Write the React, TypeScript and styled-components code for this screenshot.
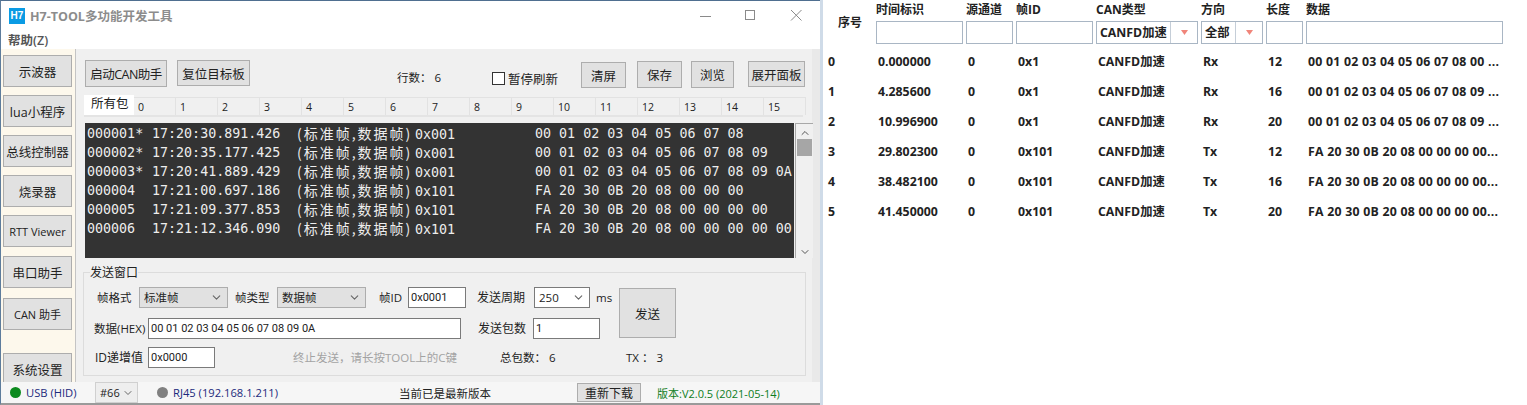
import styled, { createGlobalStyle } from "styled-components";
import { ChevronDown, ChevronUp } from "lucide-react";

const UI_FONT = `"Open Sans", "Noto Sans CJK SC", sans-serif`;

const GlobalStyle = createGlobalStyle`
  html, body {
    margin: 0;
    padding: 0;
    background: #fff;
    overflow: hidden;
  }
  * { box-sizing: border-box; }
`;

const Page = styled.div`
  display: flex;
  width: 1527px;
  height: 405px;
  font-family: ${UI_FONT};
  color: #222;
`;

const Window = styled.div`
  display: flex;
  flex-direction: column;
  width: 820px;
  height: 405px;
  flex: none;
  border-top: 1px solid #4f6f90;
  border-left: 1px solid #5d7c9c;
  border-bottom: 2px solid #9a9a9a;
  background: #fff;
`;

const Gutter = styled.div`
  width: 3px;
  flex: none;
  background: #cfdbe8;
`;

const TitleBar = styled.div`
  display: flex;
  align-items: center;
  height: 29px;
  flex: none;
  padding: 0 7px 0 8px;
`;

const AppIcon = styled.div`
  display: flex;
  align-items: center;
  justify-content: center;
  width: 16px;
  height: 16px;
  background: #0a9be4;
  color: #fff;
  font: bold 10px "Liberation Sans", sans-serif;
`;

const AppTitle = styled.div`
  margin-left: 5px;
  font-size: 12.5px;
  font-weight: 700;
  color: #8c8c8c;
  flex: 1;
`;

const WinControls = styled.svg`
  width: 115px;
  height: 14px;
  flex: none;
`;

const MenuBar = styled.div`
  height: 19px;
  flex: none;
  padding-left: 7px;
  font-size: 12.5px;
  font-weight: 600;
  line-height: 22px;
  color: #555;
`;

const Body = styled.div`
  display: flex;
  flex: 1;
  min-height: 0;
  background: #f0f0f0;
`;

const Sidebar = styled.div`
  display: flex;
  flex-direction: column;
  gap: 8px;
  width: 75px;
  flex: none;
  padding: 6px 0 0 2px;
  background: #fdf8ec;
  border-right: 1px solid #c4c4c4;
  overflow: hidden;
`;

const SideButton = styled.div<{ $small?: boolean; $gapTop?: number }>`
  display: flex;
  align-items: center;
  justify-content: center;
  width: 69px;
  height: 32px;
  flex: none;
  margin-top: ${(p) => p.$gapTop ?? 0}px;
  background: #e1e1e1;
  border: 1px solid #adadad;
  font-size: ${(p) => (p.$small ? 11 : 12.5)}px;
  white-space: nowrap;
`;

const Main = styled.div`
  display: flex;
  flex-direction: column;
  flex: 1;
  min-width: 0;
  padding: 11px 14px 0 9px;
  background: linear-gradient(to right, #f0f0f0 736px, #e9e9e9 736px);
`;

const ToolRow = styled.div`
  display: flex;
  align-items: flex-start;
  height: 37px;
  flex: none;
`;

const ToolButton = styled.div<{ $w: number; $h?: number; $left?: number; $top?: number; $tight?: boolean }>`
  display: flex;
  align-items: center;
  justify-content: center;
  width: ${(p) => p.$w}px;
  height: ${(p) => p.$h ?? 27}px;
  flex: none;
  margin-left: ${(p) => p.$left ?? 0}px;
  margin-top: ${(p) => p.$top ?? 0}px;
  background: #e1e1e1;
  border: 1px solid #adadad;
  font-size: 12.5px;
  letter-spacing: ${(p) => (p.$tight ? "-0.5px" : "0")};
  white-space: nowrap;
`;

const RowCount = styled.div`
  width: 95px;
  margin: 9px 0 0 147px;
  font-size: 11.5px;
  white-space: pre;
`;

const PauseCheck = styled.label`
  display: flex;
  align-items: center;
  gap: 3px;
  width: 89px;
  margin-top: 9px;
  font-size: 12.5px;
  white-space: nowrap;
`;

const CheckBox = styled.span`
  width: 13px;
  height: 13px;
  background: #fff;
  border: 1px solid #333;
`;

const TabStrip = styled.div`
  display: flex;
  align-items: flex-end;
  width: 719px;
  height: 20px;
  flex: none;
  margin-left: -1px;
  border-bottom: 2px solid #e4e4e4;
`;

const ActiveTab = styled.div`
  width: 50px;
  height: 20px;
  flex: none;
  padding-left: 7px;
  background: #fff;
  font-size: 12.5px;
  line-height: 18px;
`;

const Tab = styled.div`
  width: 42px;
  height: 18px;
  flex: none;
  padding-left: 4px;
  border-top: 1px solid #e2e2e2;
  border-right: 1px solid #e2e2e2;
  font-size: 10.5px;
  line-height: 18px;
`;

const ListFrame = styled.div`
  display: flex;
  width: 728px;
  height: 135px;
  flex: none;
  margin-top: 6px;
`;

const PacketList = styled.div`
  width: 709px;
  padding: 1px 0 0 2px;
  background: #333;
  color: #ededed;
  font-family: "DejaVu Sans Mono", "Noto Sans CJK SC", monospace;
  font-size: 13.33px;
  overflow: hidden;
`;

const PacketRow = styled.div`
  display: grid;
  grid-template-columns: 65px 145px 238px 1fr;
  height: 19px;
  line-height: 19px;
  white-space: pre;
`;

const FrameKind = styled.span`
  display: inline-block;
  width: 118px;
  font-family: "Noto Sans CJK SC", sans-serif;
  font-size: 14px;
  letter-spacing: 2px;
`;

const ScrollBar = styled.div`
  display: flex;
  flex-direction: column;
  align-items: center;
  width: 18px;
  flex: none;
  margin-left: 1px;
  padding: 3px 0 0;
  background: #f0f0f0;
  border-top: 1px solid #a8a8a8;
  border-left: 1px solid #a8a8a8;
  color: #555;
`;

const ScrollTrack = styled.div`
  flex: 1;
  width: 100%;
  padding: 0 1px 0 1px;
`;

const ScrollThumb = styled.div`
  height: 17px;
  background: #a6a6a6;
`;

const SendGroup = styled.fieldset`
  display: block;
  width: 723px;
  height: 110px;
  flex: none;
  margin: 8px 0 0 -2px;
  padding: 2px 0 0 7px;
  border: 1px solid #dcdcdc;
  min-inline-size: 0;
`;

const GroupTitle = styled.legend`
  margin-left: -1px;
  padding: 0;
  font-size: 12px;
  line-height: 13px;
`;

const SendGrid = styled.div`
  display: flex;
  align-items: flex-start;
`;

const SendFields = styled.div`
  display: flex;
  flex-direction: column;
  width: 528px;
  flex: none;
`;

const FieldRow = styled.div<{ $h: number }>`
  display: flex;
  align-items: center;
  height: ${(p) => p.$h}px;
`;

const Label = styled.span<{ $w?: number; $left?: number; $muted?: boolean; $size?: number }>`
  width: ${(p) => (p.$w ? `${p.$w}px` : "auto")};
  flex: none;
  margin-left: ${(p) => p.$left ?? 0}px;
  color: ${(p) => (p.$muted ? "#a3a3a3" : "#222")};
  font-size: ${(p) => p.$size ?? 11.5}px;
  white-space: pre;
`;

const Field = styled.div<{ $w: number; $left?: number }>`
  display: flex;
  align-items: center;
  width: ${(p) => p.$w}px;
  height: 21px;
  flex: none;
  margin-left: ${(p) => p.$left ?? 0}px;
  padding-left: 2px;
  background: #fff;
  border: 1px solid #7a7a7a;
  font-family: Roboto, sans-serif;
  font-size: 11px;
`;

const Dropdown = styled.div<{ $w: number; $left?: number; $grey?: boolean }>`
  display: flex;
  align-items: center;
  justify-content: space-between;
  width: ${(p) => p.$w}px;
  height: 21px;
  flex: none;
  margin-left: ${(p) => p.$left ?? 0}px;
  padding: 0 4px;
  background: ${(p) => (p.$grey ? "#e1e1e1" : "#fff")};
  border: 1px solid ${(p) => (p.$grey ? "#adadad" : "#7a7a7a")};
  font-size: 11.5px;
  color: #222;
`;

const SendButton = styled.div`
  display: flex;
  align-items: center;
  justify-content: center;
  width: 57px;
  height: 50px;
  flex: none;
  margin-top: 7px;
  background: #e1e1e1;
  border: 1px solid #adadad;
  font-size: 12.5px;
`;

const StatusBar = styled.div`
  display: flex;
  align-items: center;
  height: 21px;
  flex: none;
  padding-left: 9px;
  background: #f6f6f6;
  font-size: 11.5px;
`;

const Dot = styled.span<{ $color: string }>`
  width: 11px;
  height: 11px;
  flex: none;
  border-radius: 50%;
  background: ${(p) => p.$color};
`;

const LinkText = styled.span<{ $w: number }>`
  width: ${(p) => p.$w}px;
  flex: none;
  margin-left: 5px;
  color: #1c2a7c;
  font-size: 11.2px;
  white-space: nowrap;
`;

const StatusSelect = styled.div`
  display: flex;
  align-items: center;
  justify-content: space-between;
  width: 43px;
  height: 21px;
  flex: none;
  margin-right: 19px;
  padding: 0 3px 0 4px;
  background: #eee;
  border: 1px solid #d0d0d0;
  font-size: 11px;
`;

const StatusText = styled.span`
  width: 178px;
  flex: none;
  margin-left: 119px;
  white-space: nowrap;
`;

const ReloadButton = styled.div`
  display: flex;
  align-items: center;
  justify-content: center;
  width: 64px;
  height: 19px;
  flex: none;
  background: #e1e1e1;
  border: 1px solid #adadad;
  font-size: 12px;
`;

const VersionText = styled.span`
  margin-left: 16px;
  color: #0d7d1c;
  font-size: 11px;
  white-space: nowrap;
`;

const TablePanel = styled.div`
  flex: 1;
  padding: 0 0 0 5px;
  background: #fff;
`;

const TableGrid = styled.div`
  display: grid;
  grid-template-columns: 45px 87px 47px 77px 102px 62px 37px 197px;
  grid-template-rows: 21px 23px;
  column-gap: 3px;
  margin-bottom: 2px;
`;

const HeadCell = styled.div`
  font-size: 12px;
  font-weight: 700;
  line-height: 19px;
  white-space: nowrap;
`;

const SeqHead = styled(HeadCell)`
  grid-row: 1 / span 2;
  align-self: center;
  padding-left: 10px;
`;

const FilterBox = styled.div`
  height: 23px;
  border: 1px solid #a9b6c4;
  background: #fff;
`;

const FilterSelect = styled.div<{ $arrow: number }>`
  display: grid;
  grid-template-columns: ${(p) => p.$arrow}px 1fr;
  align-items: center;
  height: 23px;
  border: 1px solid #a9b6c4;
  font-size: 12.3px;
  font-weight: 700;
  white-space: nowrap;
`;

const FilterValue = styled.span`
  padding-left: 3px;
  border-right: 1px solid #c5ced8;
  line-height: 21px;
  overflow: hidden;
`;

const FilterArrow = styled.svg`
  justify-self: center;
  width: 7px;
  height: 5px;
`;

const DataRow = styled.div`
  display: grid;
  grid-template-columns: 45px 87px 47px 77px 102px 62px 37px 197px;
  column-gap: 3px;
  height: 30px;
  align-items: center;
  font-size: 12.3px;
  font-weight: 700;
  color: #222;
  white-space: nowrap;
`;

const DataCell = styled.div<{ $wide?: boolean }>`
  padding-left: 2px;
  letter-spacing: ${(p) => (p.$wide ? "0.25px" : "0")};
`;

const SeqCell = styled.div``;

const sideItems: [string, number][] = [
  ["示波器", 0],
  ["lua小程序", 0],
  ["总线控制器", 0],
  ["烧录器", 0],
  ["RTT Viewer", 0],
  ["串口助手", 1],
  ["CAN 助手", 2],
];
const tabs = Array.from({ length: 16 }, (_, i) => String(i));

const packets = [
  ["000001*", "17:20:30.891.426", "0x001", "00 01 02 03 04 05 06 07 08"],
  ["000002*", "17:20:35.177.425", "0x001", "00 01 02 03 04 05 06 07 08 09"],
  ["000003*", "17:20:41.889.429", "0x001", "00 01 02 03 04 05 06 07 08 09 0A"],
  ["000004", "17:21:00.697.186", "0x101", "FA 20 30 0B 20 08 00 00 00"],
  ["000005", "17:21:09.377.853", "0x101", "FA 20 30 0B 20 08 00 00 00 00"],
  ["000006", "17:21:12.346.090", "0x101", "FA 20 30 0B 20 08 00 00 00 00 00"],
];

const rows = [
  ["0", "0.000000", "0", "0x1", "CANFD加速", "Rx", "12", "00 01 02 03 04 05 06 07 08 00 ..."],
  ["1", "4.285600", "0", "0x1", "CANFD加速", "Rx", "16", "00 01 02 03 04 05 06 07 08 09 ..."],
  ["2", "10.996900", "0", "0x1", "CANFD加速", "Rx", "20", "00 01 02 03 04 05 06 07 08 09 ..."],
  ["3", "29.802300", "0", "0x101", "CANFD加速", "Tx", "12", "FA 20 30 0B 20 08 00 00 00 00..."],
  ["4", "38.482100", "0", "0x101", "CANFD加速", "Tx", "16", "FA 20 30 0B 20 08 00 00 00 00..."],
  ["5", "41.450000", "0", "0x101", "CANFD加速", "Tx", "20", "FA 20 30 0B 20 08 00 00 00 00..."],
];

const Arrow = () => (
  <FilterArrow viewBox="0 0 7 5">
    <path d="M0 0h7L3.5 5z" fill="#f0857a" />
  </FilterArrow>
);

export default function App() {
  return (
    <Page>
      <GlobalStyle />
      <Window>
        <TitleBar>
          <AppIcon>H7</AppIcon>
          <AppTitle>H7-TOOL多功能开发工具</AppTitle>
          <WinControls viewBox="0 0 115 14" fill="none" stroke="#8a8a8a" strokeWidth="1">
            <path d="M2 7.5h11" />
            <rect x="47.5" y="1.5" width="9" height="9" />
            <path d="M93 1l10.5 10.5M103.5 1L93 11.5" />
          </WinControls>
        </TitleBar>
        <MenuBar>帮助(Z)</MenuBar>
        <Body>
          <Sidebar>
            {sideItems.map(([item, gap]) => (
              <SideButton key={item} $gapTop={gap} $small={item === "RTT Viewer" || item === "CAN 助手"}>
                {item}
              </SideButton>
            ))}
            <SideButton $gapTop={15}>系统设置</SideButton>
          </Sidebar>
          <Main>
            <ToolRow>
              <ToolButton $w={82} $tight>启动CAN助手</ToolButton>
              <ToolButton $w={73} $left={10} $h={26}>复位目标板</ToolButton>
              <RowCount>{"行数： 6"}</RowCount>
              <PauseCheck>
                <CheckBox />
                暂停刷新
              </PauseCheck>
              <ToolButton $w={45} $h={26} $top={2}>清屏</ToolButton>
              <ToolButton $w={45} $left={11} $top={1}>保存</ToolButton>
              <ToolButton $w={43} $left={9} $top={1}>浏览</ToolButton>
              <ToolButton $w={57} $left={14} $top={1} $h={26}>展开面板</ToolButton>
            </ToolRow>
            <TabStrip>
              <ActiveTab>所有包</ActiveTab>
              {tabs.map((t) => (
                <Tab key={t}>{t}</Tab>
              ))}
            </TabStrip>
            <ListFrame>
              <PacketList>
                {packets.map(([seq, time, id, data]) => (
                  <PacketRow key={seq}>
                    <span>{seq}</span>
                    <span>{time}</span>
                    <span>
                      <FrameKind>(标准帧,数据帧)</FrameKind>
                      {id}
                    </span>
                    <span>{data}</span>
                  </PacketRow>
                ))}
              </PacketList>
              <ScrollBar>
                <ChevronUp size={12} />
                <ScrollTrack>
                  <ScrollThumb />
                </ScrollTrack>
                <ChevronDown size={12} />
              </ScrollBar>
            </ListFrame>
            <SendGroup>
              <GroupTitle>发送窗口</GroupTitle>
              <SendGrid>
                <SendFields>
                  <FieldRow $h={32}>
                    <Label $w={42} $left={6}>帧格式</Label>
                    <Dropdown $w={89} $grey>
                      标准帧
                      <ChevronDown size={13} color="#666" />
                    </Dropdown>
                    <Label $w={42} $left={7}>帧类型</Label>
                    <Dropdown $w={89} $grey>
                      数据帧
                      <ChevronDown size={13} color="#666" />
                    </Dropdown>
                    <Label $w={29} $left={13}>帧ID</Label>
                    <Field $w={58}>0x0001</Field>
                    <Label $w={57} $left={11} $size={12}>发送周期</Label>
                    <Dropdown $w={56}>
                      250
                      <ChevronDown size={13} color="#666" />
                    </Dropdown>
                    <Label $left={6}>ms</Label>
                  </FieldRow>
                  <FieldRow $h={30}>
                    <Label $w={54} $left={3}>数据(HEX)</Label>
                    <Field $w={313}>00 01 02 03 04 05 06 07 08 09 0A</Field>
                    <Label $w={55} $left={17} $size={12}>发送包数</Label>
                    <Field $w={67}>1</Field>
                  </FieldRow>
                  <FieldRow $h={28}>
                    <Label $w={53} $left={4} $size={12}>ID递增值</Label>
                    <Field $w={67}>0x0000</Field>
                    <Label $w={207} $left={78} $muted>终止发送，请长按TOOL上的C键</Label>
                    <Label $w={126}>{"总包数： 6"}</Label>
                    <Label>{"TX ： 3"}</Label>
                  </FieldRow>
                </SendFields>
                <SendButton>发送</SendButton>
              </SendGrid>
            </SendGroup>
          </Main>
        </Body>
        <StatusBar>
          <Dot $color="#0c8a1e" />
          <LinkText $w={69}>USB (HID)</LinkText>
          <StatusSelect>
            #66
            <ChevronDown size={12} color="#666" />
          </StatusSelect>
          <Dot $color="#808080" />
          <LinkText $w={107}>RJ45 (192.168.1.211)</LinkText>
          <StatusText>当前已是最新版本</StatusText>
          <ReloadButton>重新下载</ReloadButton>
          <VersionText>版本:V2.0.5 (2021-05-14)</VersionText>
        </StatusBar>
      </Window>
      <Gutter />
      <TablePanel>
        <TableGrid>
          <SeqHead>序号</SeqHead>
          <HeadCell>时间标识</HeadCell>
          <HeadCell>源通道</HeadCell>
          <HeadCell>帧ID</HeadCell>
          <HeadCell>CAN类型</HeadCell>
          <HeadCell>方向</HeadCell>
          <HeadCell>长度</HeadCell>
          <HeadCell>数据</HeadCell>
          <FilterBox />
          <FilterBox />
          <FilterBox />
          <FilterSelect $arrow={74}>
            <FilterValue>CANFD加速</FilterValue>
            <Arrow />
          </FilterSelect>
          <FilterSelect $arrow={34}>
            <FilterValue>全部</FilterValue>
            <Arrow />
          </FilterSelect>
          <FilterBox />
          <FilterBox />
        </TableGrid>
        {rows.map((row) => (
          <DataRow key={row[0]}>
            <SeqCell>{row[0]}</SeqCell>
            {row.slice(1).map((cell, i) => (
              <DataCell key={i} $wide={i === 6}>{cell}</DataCell>
            ))}
          </DataRow>
        ))}
      </TablePanel>
    </Page>
  );
}
